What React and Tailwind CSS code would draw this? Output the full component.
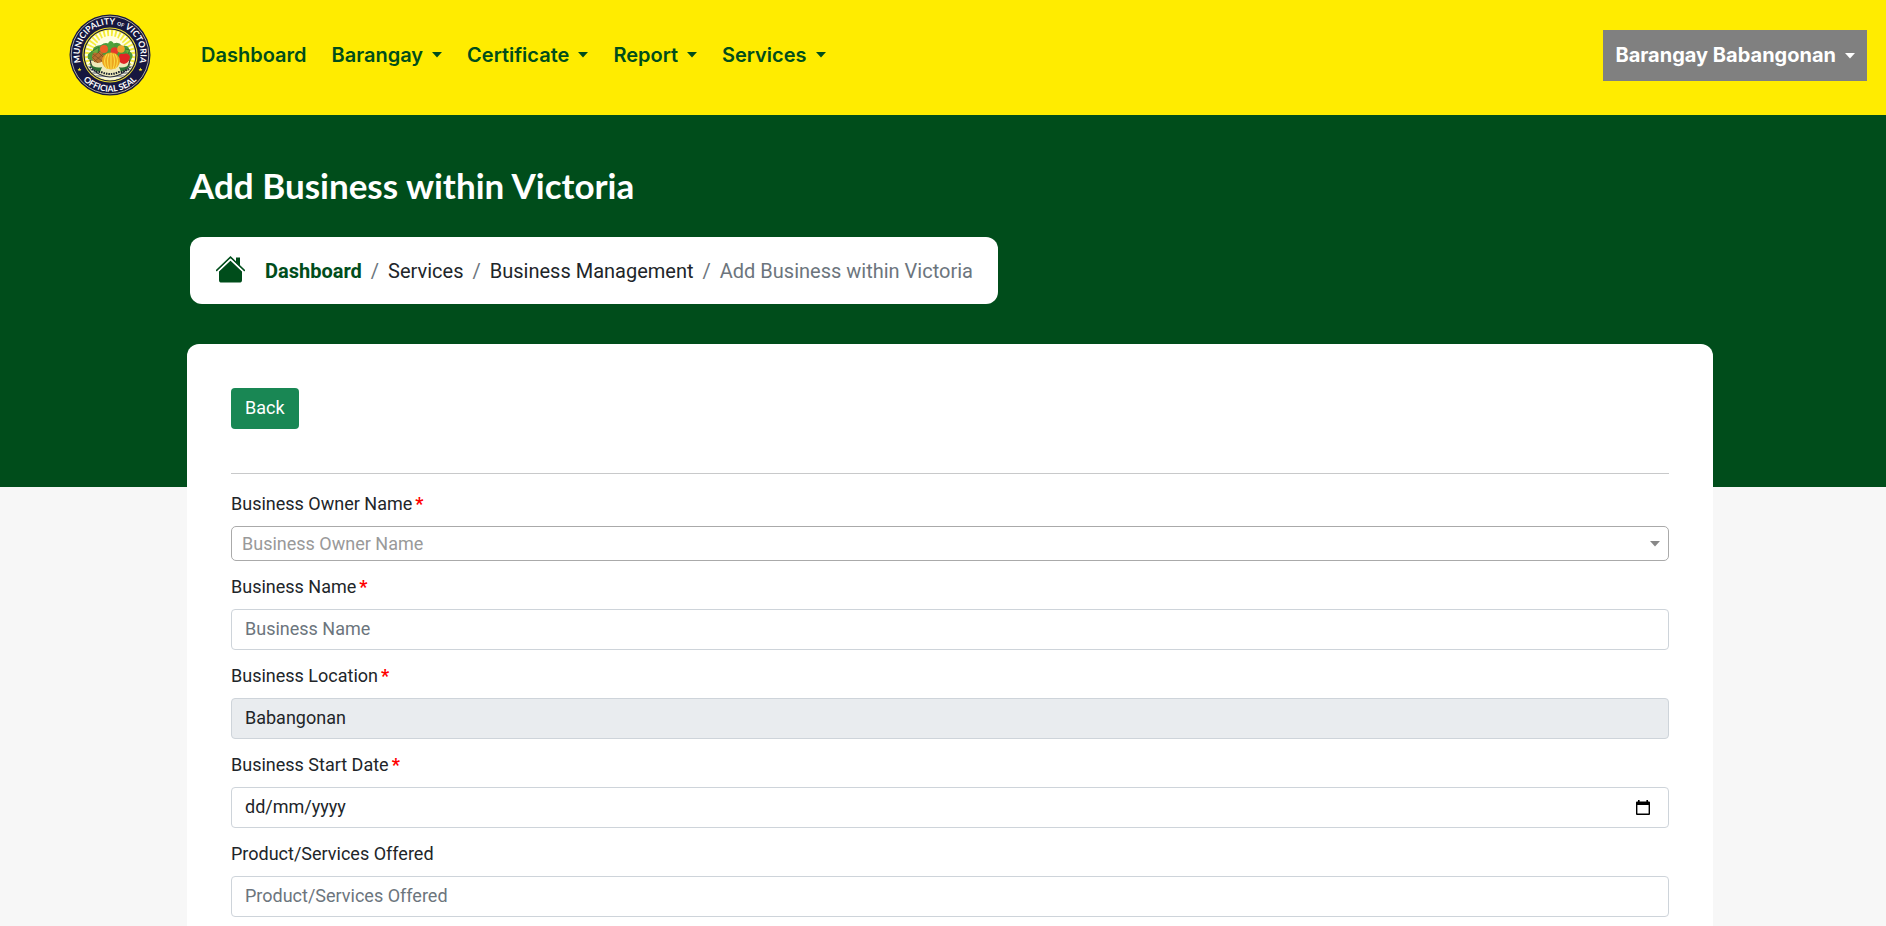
import React from "react";

const NAV_ITEMS = ["Barangay", "Certificate", "Report", "Services"];

function Caret({ className = "" }) {
  return (
    <svg className={"h-[6px] w-[10px] " + className} viewBox="0 0 10 6" aria-hidden="true">
      <path d="M0 0H10L5 5.5Z" fill="currentColor" />
    </svg>
  );
}

function Seal() {
  const rays = Array.from({ length: 36 }, (_, i) => i * 10);
  return (
    <svg className="size-[82px]" viewBox="-41 -41 82 82" role="img" aria-label="Municipality of Victoria official seal">
      <defs>
        <path id="seal-top" d="M-28.8 9.5A30.4 30.4 0 1 1 28.8 9.5" />
        <path id="seal-bottom" d="M-29 22.5A36.7 36.7 0 0 0 29 22.5" />
        <clipPath id="seal-center">
          <circle r="25" />
        </clipPath>
      </defs>
      <circle r="40.5" fill="#16173f" />
      <circle r="38.8" fill="none" stroke="#e9e6c4" strokeWidth="0.7" />
      <circle r="27.6" fill="#f2e430" />
      <circle r="26.6" fill="#16173f" />
      <circle r="25.4" fill="#f4ec3c" />
      <g clipPath="url(#seal-center)">
        {rays.map((angle) => (
          <path key={angle} d="M0 -3L1.3 -28H-1.3Z" fill="#fffde0" transform={`rotate(${angle})`} />
        ))}
        <circle cy="-4" r="15" fill="#fffde4" />
        <path d="M-26 9Q0 13 26 9V26H-26Z" fill="#f4f3df" />
        <path d="M-25 12H25M-24 15H24M-22 18H22M-18 21H18" stroke="#27305a" strokeWidth="0.8" />
      </g>
      <path d="M-20 5Q-17 21 0 22Q17 21 20 5Z" fill="#eee9bb" stroke="#282d38" strokeWidth="1.2" />
      <path d="M-22 4Q-24 -2 -17 -4Q-18 -9 -9 -10Q-4 -14 1 -10Q8 -15 12 -9Q20 -10 19 -4Q25 -1 21 5Q0 11 -22 4Z" fill="#4c9a3a" />
      <ellipse cx="-12" cy="2" rx="6" ry="6" fill="#b9702f" />
      <path d="M-17 -1L-8 6M-17 3L-12 8M-13 -4L-6 3M-7 -1L-16 7M-10 -4L-18 3" stroke="#77501f" strokeWidth="0.7" />
      <circle cx="-6" cy="-6" r="4" fill="#ef5c28" />
      <path d="M-2 -6Q-3 -14 1 -14Q5 -13 4 -6Z" fill="#4fa33a" />
      <circle cx="4.5" cy="-4" r="3.8" fill="#e53a2d" />
      <circle cx="11" cy="-6" r="3.8" fill="#f0a42b" />
      <path d="M-19 -3L-11 -8L-12 -2M15 -6L20 -5L18 -1" fill="#6cae3c" stroke="#246b2b" strokeWidth="0.7" />
      <path d="M9 2Q9 -2 13 -1Q19 -3 20 2Q19 8 14 9Q8 8 9 2Z" fill="#df2424" />
      <path d="M-21 8Q-15 14 -8 12L-10 17Q-18 15 -21 8ZM21 8Q15 14 9 12L11 17Q18 15 21 8Z" fill="#2c7133" />
      <path d="M-20 12Q-16 17 -9 17Q0 21 9 17Q16 17 20 12" fill="none" stroke="#17202c" strokeWidth="2" strokeDasharray="1.5 1" />
      <ellipse cx="1" cy="6" rx="9" ry="8.5" fill="#eda51e" />
      <path d="M1 -2V14M-3 -1Q-8 6 -3 14M5 -1Q10 6 5 14M-1 -1Q-4 6 -1 14M3 -1Q6 6 3 14" fill="none" stroke="#fbdc47" strokeWidth="1.1" />
      <g fill="#fff" fontFamily="Lato, sans-serif" fontWeight="700" textAnchor="middle">
        <text fontSize="8.6">
          <textPath href="#seal-top" startOffset="50%">
            MUNICIPALITY <tspan fontSize="5">OF</tspan> VICTORIA
          </textPath>
        </text>
        <text fontSize="8.6">
          <textPath href="#seal-bottom" startOffset="50%">OFFICIAL SEAL</textPath>
        </text>
      </g>
      <path id="seal-star" d="M0 -2L0.6 -0.6L2 -0.5L0.9 0.4L1.2 1.8L0 1L-1.2 1.8L-0.9 0.4L-2 -0.5L-0.6 -0.6Z" fill="#f2e430" transform="translate(-30.5 14.5)" />
      <use href="#seal-star" x="61" />
    </svg>
  );
}

function HomeIcon() {
  return (
    <svg className="h-[27px] w-[29px]" viewBox="0 0 29 27" fill="#004d1b" aria-hidden="true">
      <path d="M3 15.2L14.5 4.6L26 15.2V24Q26 26.6 23.4 26.6H5.6Q3 26.6 3 24Z" />
      <path d="M20 1.6H24V9.8L20 6.1Z" />
      <path d="M0.7 14.4L14.5 1.2L28.3 14.4" fill="none" stroke="#004d1b" strokeWidth="1.6" strokeLinecap="round" />
      <path d="M2.2 15.3L14.5 3.6L26.8 15.3" fill="none" stroke="#fff" strokeWidth="1.4" />
    </svg>
  );
}

function CalendarIcon() {
  return (
    <svg className="h-[16px] w-[14px]" viewBox="0 0 14 16" aria-hidden="true">
      <path d="M2 0H3.6V1.5H10.4V0H12V1.5H13Q14 1.5 14 2.5V14Q14 15 13 15H1Q0 15 0 14V2.5Q0 1.5 1 1.5H2ZM1.4 5V13.6H12.6V5Z" fill="#000" fillRule="evenodd" />
    </svg>
  );
}

function Field({ id, label, required, children }) {
  return (
    <div className="flex flex-col gap-[9px]">
      <label htmlFor={id} className="flex gap-[3px] self-start">
        {label}
        {required && <span className="font-bold text-[#ff0000]">*</span>}
      </label>
      {children}
    </div>
  );
}

const INPUT =
  "h-[41px] w-full rounded-[4px] border border-[#ced4da] bg-white px-[13px] pb-[2px] text-[#212529] placeholder:text-[#6c757d] outline-none";

export default function App() {
  return (
    <div className="flex min-h-screen flex-col bg-[#f7f7f7] font-[Roboto,sans-serif] text-[18px] leading-[27px] text-[#212529]">
      <header className="flex h-[115px] items-start justify-between bg-[#ffec00] pr-[19px] pl-[69px] font-[Inter,sans-serif] text-[20px] leading-[27px] text-[#004d1b]">
        <div className="flex items-center gap-[50px] pt-[14px]">
          <a href="#home">
            <Seal />
          </a>
          <nav className="flex items-center gap-[25px] font-semibold">
            <a href="#dashboard">Dashboard</a>
            {NAV_ITEMS.map((item) => (
              <button key={item} type="button" className="flex items-center gap-[9px]">
                {item}
                <Caret />
              </button>
            ))}
          </nav>
        </div>
        <button type="button" className="mt-[30px] flex h-[51px] items-center gap-[9px] bg-[#808080] px-[12px] font-bold text-white">
          Barangay Babangonan
          <Caret />
        </button>
      </header>

      <section className="h-[372px] bg-[#004d1b] pt-[48px] pr-[173px] pl-[190px]">
        <h1 className="font-[Lato,sans-serif] text-[35px] leading-[44px] font-bold text-white">Add Business within Victoria</h1>
        <nav aria-label="Breadcrumb" className="mt-[30px] flex h-[67px] w-fit items-center rounded-[12px] bg-white pr-[25px] pl-[26px] text-[20px]">
          <div className="pb-[2px]">
            <HomeIcon />
          </div>
          <ol className="ml-[20px] flex items-center gap-[9px] pt-[2px]">
            <li>
              <a href="#dashboard" className="font-bold text-[#004d1b]">Dashboard</a>
            </li>
            <li className="text-[#6c757d]" aria-hidden="true">/</li>
            <li>
              <a href="#services">Services</a>
            </li>
            <li className="text-[#6c757d]" aria-hidden="true">/</li>
            <li>
              <a href="#business">Business Management</a>
            </li>
            <li className="text-[#6c757d]" aria-hidden="true">/</li>
            <li className="text-[#6c757d]" aria-current="page">Add Business within Victoria</li>
          </ol>
        </nav>
      </section>

      <main className="-mt-[143px] mr-[173px] ml-[187px] flex-1 rounded-t-[12px] bg-white px-[44px] pt-[44px] pb-[9px]">
        <button type="button" className="block h-[41px] rounded-[4px] bg-[#198754] px-[14px] pb-[2px] text-white">Back</button>
        <hr className="mt-[44px] border-[#c8c9ca]" />
        <form className="mt-[16px] flex flex-col gap-[12px]">
          <Field id="owner" label="Business Owner Name" required>
            <div className="grid items-center">
              <select id="owner" defaultValue="" className="col-start-1 row-start-1 h-[35px] w-full appearance-none rounded-[5px] border border-[#aaa] bg-white px-[10px] text-[#999] outline-none">
                <option value="">Business Owner Name</option>
              </select>
              <Caret className="pointer-events-none col-start-1 row-start-1 mr-[9px] justify-self-end text-[#888]" />
            </div>
          </Field>
          <Field id="name" label="Business Name" required>
            <input id="name" type="text" placeholder="Business Name" className={INPUT} />
          </Field>
          <Field id="location" label="Business Location" required>
            <input id="location" type="text" readOnly defaultValue="Babangonan" className="h-[41px] w-full rounded-[4px] border border-[#ced4da] bg-[#e9ecef] px-[13px] pb-[2px] text-[#212529] outline-none" />
          </Field>
          <Field id="start" label="Business Start Date" required>
            <div className="flex h-[41px] items-center rounded-[4px] border border-[#ced4da] bg-white pr-[18px] pl-[13px]">
              <input id="start" type="text" placeholder="dd/mm/yyyy" className="min-w-0 flex-1 pb-[2px] placeholder:text-[#212529] outline-none" />
              <button type="button" aria-label="Choose date">
                <CalendarIcon />
              </button>
            </div>
          </Field>
          <Field id="products" label="Product/Services Offered">
            <input id="products" type="text" placeholder="Product/Services Offered" className={INPUT} />
          </Field>
        </form>
      </main>
    </div>
  );
}
